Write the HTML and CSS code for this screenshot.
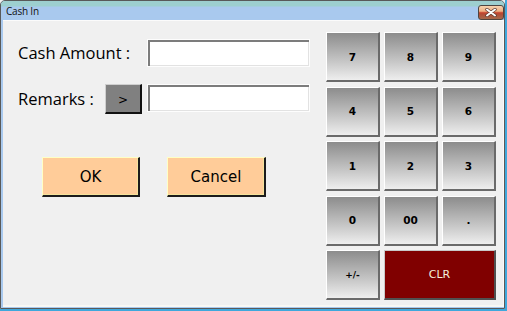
FILE: index.html
```html
<!DOCTYPE html>
<html>
<head>
<meta charset="utf-8">
<title>Cash In</title>
<link rel="stylesheet" href="styles.css">
</head>
<body>
<div class="screen">
  <div class="window">
    <div class="titlebar">
      <span class="title">Cash In</span>
      <div class="close">
        <svg width="12" height="9" viewBox="0 0 12 9">
          <path d="M2 1.5 L10 7.5 M10 1.5 L2 7.5" stroke="#5a3a30" stroke-width="3.4" stroke-linecap="round"/>
          <path d="M2 1.5 L10 7.5 M10 1.5 L2 7.5" stroke="#ffffff" stroke-width="2" stroke-linecap="round"/>
        </svg>
      </div>
    </div>
    <div class="client">
      <div class="form">
        <div class="row row-amount">
          <span class="lbl lbl-amount">Cash Amount :</span>
          <div class="field"></div>
        </div>
        <div class="row row-remarks">
          <span class="lbl lbl-remarks">Remarks :</span>
          <div class="more">&gt;</div>
          <div class="field"></div>
        </div>
        <div class="actions">
          <div class="act act-ok">OK</div>
          <div class="act act-cancel">Cancel</div>
        </div>
      </div>
      <div class="keypad">
        <div class="key">7</div>
        <div class="key">8</div>
        <div class="key">9</div>
        <div class="key">4</div>
        <div class="key">5</div>
        <div class="key">6</div>
        <div class="key">1</div>
        <div class="key">2</div>
        <div class="key">3</div>
        <div class="key">0</div>
        <div class="key">00</div>
        <div class="key">.</div>
        <div class="key key-sign">+/-</div>
        <div class="key key-clr">CLR</div>
      </div>
    </div>
  </div>
</div>
</body>
</html>
```
FILE: styles.css
```css
html, body {
  margin: 0;
  padding: 0;
  background: #f0f0f0;
}

.screen {
  width: 507px;
  height: 311px;
  box-sizing: border-box;
  border-right: 2px solid #3fa8dc;
  border-bottom: 2px solid #3fa8dc;
}

.window {
  height: 100%;
  box-sizing: border-box;
  border: 1px solid #595959;
  border-radius: 5px 5px 0 0;
  background: #a9c9ee;
  display: flex;
  flex-direction: column;
  padding: 0 0 1px 2px;
}

.titlebar {
  height: 19px;
  flex: none;
  display: flex;
  align-items: center;
  justify-content: space-between;
  margin-left: -2px;
  padding-left: 5px;
  padding-right: 0;
  background: linear-gradient(#9dcfcf 0, #9dcfcf 5px, #a9c9ee 6px);
  border-radius: 4px 4px 0 0;
}

.title {
  font-family: "Open Sans", sans-serif;
  font-size: 10px;
  letter-spacing: -0.2px;
  color: #111;
  margin-top: 1px;
}

.close {
  width: 24px;
  height: 13px;
  margin-top: 3px;
  border: 1px solid #4e4540;
  border-radius: 3px;
  background: linear-gradient(#f6d2ae 0%, #eeb184 40%, #c6432e 52%, #b44c36 62%, #a46a4c 100%);
  display: flex;
  align-items: center;
  justify-content: center;
}

.close svg {
  display: block;
}

.client {
  flex: 1;
  display: flex;
  background: #f0f0f0;
  border-top: 1px solid #fbfbfb;
  border-right: 1px solid #fafafa;
  border-bottom: 2px solid #f8f8f4;
}

.form {
  width: 323px;
  box-sizing: border-box;
  padding: 18px 0 0 15px;
}

.row {
  display: flex;
  align-items: center;
}

.row-amount {
  height: 28px;
}

.row-remarks {
  height: 30px;
  margin-top: 17px;
  align-items: flex-start;
}

.lbl {
  font-family: "Open Sans", sans-serif;
  font-size: 16.5px;
  color: #000;
  line-height: 28px;
  white-space: nowrap;
}

.lbl-amount {
  width: 129px;
}

.lbl-remarks {
  width: 87px;
  line-height: 30px;
}

.field {
  width: 163px;
  height: 28px;
  box-sizing: border-box;
  background: #ffffff;
  border: 1px solid #fdfdfd;
  box-shadow: inset 2px 2px 0 #7c7c7c, inset -1px -1px 0 #e2e2e2;
}

.more {
  width: 37px;
  height: 30px;
  box-sizing: border-box;
  margin-right: 5px;
  background: #808080;
  border-top: 1px solid #cfcfcf;
  border-left: 1px solid #cfcfcf;
  border-right: 2px solid #111;
  border-bottom: 2px solid #111;
  display: flex;
  align-items: center;
  justify-content: center;
  font-family: "DejaVu Sans", sans-serif;
  font-size: 12px;
  color: #000;
  padding-top: 2px;
}

.actions {
  display: flex;
  gap: 27px;
  margin-top: 43px;
  padding-left: 24px;
}

.act {
  height: 40px;
  box-sizing: border-box;
  background: #ffcc99;
  border-top: 1px solid #ffffc4;
  border-left: 1px solid #ffffc4;
  border-right: 2px solid #1c1c1c;
  border-bottom: 2px solid #1c1c1c;
  box-shadow: inset -1px -1px 0 #f4e39c;
  display: flex;
  align-items: center;
  justify-content: center;
  font-family: "DejaVu Sans", sans-serif;
  font-size: 15px;
  color: #000;
}

.act-ok {
  width: 98px;
}

.act-cancel {
  width: 99px;
}

.keypad {
  display: grid;
  grid-template-columns: 54px 54px 54px;
  grid-template-rows: repeat(5, 50px);
  column-gap: 4px;
  row-gap: 4.5px;
  padding-top: 11px;
  align-content: start;
}

.key {
  box-sizing: border-box;
  border-top: 1px solid #ffffff;
  border-left: 1px solid #ffffff;
  border-right: 2px solid #6a6a6a;
  border-bottom: 2px solid #6a6a6a;
  background: linear-gradient(#8c8c8c 0%, #a9a9a9 30%, #c6c6c6 60%, #eeeeee 100%);
  display: flex;
  align-items: center;
  justify-content: center;
  font-family: "DejaVu Sans", sans-serif;
  font-weight: bold;
  font-size: 10.5px;
  color: #000;
}

.key-sign {
  font-size: 9px;
}

.key-clr {
  grid-column: span 2;
  background: #800000;
  border-top: 1px solid #c8c8c8;
  border-left: 1px solid #c8c8c8;
  border-right: 2px solid #505050;
  border-bottom: 2px solid #505050;
  color: #f4f0dc;
  font-weight: normal;
  font-size: 11px;
}
```
